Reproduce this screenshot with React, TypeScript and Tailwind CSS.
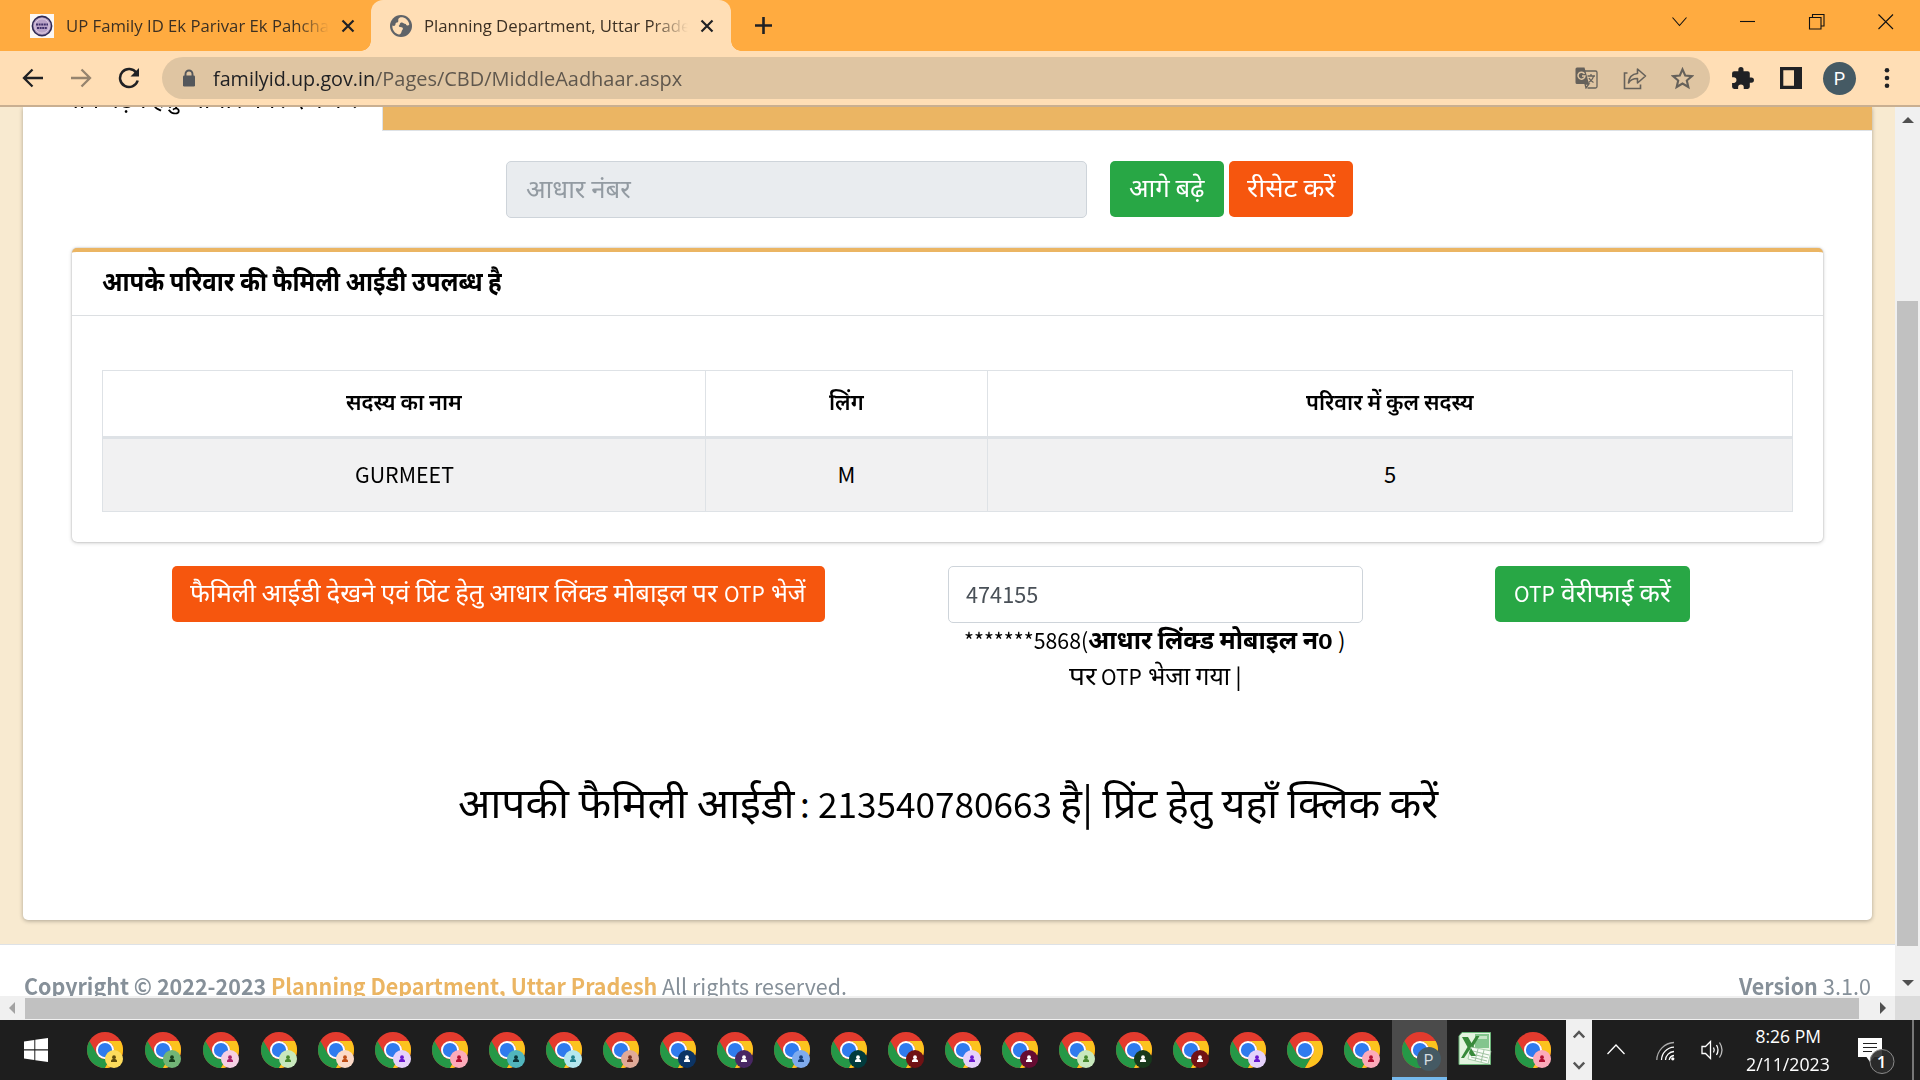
import { useLayoutEffect, useRef, type ReactNode } from "react";

/* Inline text that is stretched or squeezed horizontally to a given width. */
function Fit({ w, className = "", children }: { w: number; className?: string; children: ReactNode }) {
  const ref = useRef<HTMLSpanElement>(null);
  useLayoutEffect(() => {
    const el = ref.current;
    if (el && el.offsetWidth) el.style.transform = `scaleX(${w / el.offsetWidth})`;
  }, [w]);
  return (
    <span className={`inline-block shrink-0 whitespace-nowrap text-left ${className}`} style={{ width: w }}>
      <span ref={ref} className="inline-block origin-left whitespace-nowrap">
        {children}
      </span>
    </span>
  );
}

function CloseX({ className }: { className: string }) {
  return (
    <svg className={className} viewBox="0 0 14 14" stroke="#202124" strokeWidth="2.2" fill="none">
      <path d="M1.5 1.5 12.5 12.5M12.5 1.5 1.5 12.5" />
    </svg>
  );
}

function TabBar() {
  return (
    <div className="flex h-[51px] bg-[#ffab40] font-['Open_Sans','Noto_Sans',sans-serif] text-[17px] leading-[51px] text-[#3c3023]">
      <div className="flex w-[371px] items-center pl-[30px]">
        <div className="flex h-6 w-6 items-center justify-center bg-[#fbf7f4]">
          <svg className="h-[22px] w-[22px]" viewBox="0 0 22 22">
            <circle cx="11" cy="11" r="9.6" fill="#b9a3c8" stroke="#2f2a55" strokeWidth="1.6" />
            <circle cx="11" cy="11" r="7.2" fill="none" stroke="#dccbe0" strokeWidth="1" />
            <path d="M5 9.5h12M6 13h10" stroke="#40306a" strokeWidth="2" strokeDasharray="2 .6" />
          </svg>
        </div>
        <div className="ml-[12px] w-[263px] overflow-hidden [mask-image:linear-gradient(to_right,black_88%,transparent)]">
          <Fit w={263}>UP Family ID Ek Parivar Ek Pahcha</Fit>
        </div>
        <CloseX className="ml-[12px] h-[14px] w-[14px]" />
      </div>
      <div className="relative flex w-[360px] items-center rounded-t-[12px] bg-[#ffdeb5] pl-[19px]">
        <div className="absolute bottom-0 -left-[10px] h-[10px] w-[10px] bg-[radial-gradient(circle_at_0_0,transparent_9.5px,#ffdeb5_10px)]" />
        <div className="absolute -right-[10px] bottom-0 h-[10px] w-[10px] bg-[radial-gradient(circle_at_100%_0,transparent_9.5px,#ffdeb5_10px)]" />
        <svg className="h-[22px] w-[22px]" viewBox="0 0 22 22">
          <circle cx="11" cy="11" r="11" fill="#5f6368" />
          <path d="M10 2.5c4-.8 8.500 2 9.300 7-1 2-3 1-3.500-.5-2 0-2.500-1.500-4-1.500-2.500 0-1.500 2.500-3 3.200 0 2 3 .8 4 2.300.6 1.500-1 2-1.200 3.500-.3 1.500-1.200 3.200-2.800 3C5 18.500 2 15 2.400 10.500c1.500.8 3 .5 3.100-1.500 0-1.800 2.500-1 2.800-2.700.2-1.300-.8-2.300 1.700-3.800Z" fill="#ffdeb5" />
        </svg>
        <div className="ml-[12px] w-[264px] overflow-hidden [mask-image:linear-gradient(to_right,black_86%,transparent)]">
          <Fit w={266}>Planning Department, Uttar Prade</Fit>
        </div>
        <CloseX className="ml-[12px] h-[14px] w-[14px]" />
      </div>
      <div className="flex items-center pl-[23px]">
        <svg className="h-[19px] w-[19px]" viewBox="0 0 19 19" stroke="#202124" strokeWidth="2.6">
          <path d="M9.500 1v17M1 9.500h17" />
        </svg>
      </div>
      <svg className="mt-[13px] mr-[26px] ml-auto h-[18px] w-[222px]" viewBox="0 0 222 18" fill="none" stroke="#111" strokeWidth="1.100">
        <path d="M.5 4.500 7.500 12.500 14.500 4.500" />
        <path d="M68 8.500h15" />
        <path d="M137.500 4.500h11.500v11.500h-11.500zM140.500 4.500v-3h11.500v11.500h-3" />
        <path d="M206.500 1.500l14.500 14.500M221 1.500l-14.500 14.500" />
      </svg>
    </div>
  );
}

function Toolbar() {
  return (
    <div className="flex h-[56px] items-center border-b-2 border-[#c9af91] bg-[#ffdeb5] font-['Open_Sans','Noto_Sans',sans-serif]">
      <svg className="ml-[22px] h-[22px] w-[22px]" viewBox="0 0 22 22" fill="none" stroke="#202124" strokeWidth="2.300">
        <path d="M21 11H2.500M10.500 2.500 2 11l8.500 8.500" />
      </svg>
      <svg className="ml-[26px] h-[22px] w-[22px]" viewBox="0 0 22 22" fill="none" stroke="#96846e" strokeWidth="2.300">
        <path d="M1 11h18.500M11.500 2.500 20 11l-8.500 8.500" />
      </svg>
      <svg className="ml-[26px] h-[22px] w-[22px]" viewBox="0 0 22 22" fill="none" stroke="#202124" strokeWidth="2.500">
        <path d="M18.500 6A9 9 0 1 0 19.700 13.500" />
        <path d="M21 1v8.500h-8.500z" fill="#202124" stroke="none" />
      </svg>
      <div className="ml-[22px] flex h-[42px] w-[1548px] items-center rounded-full bg-[#dfc5a2] pl-[20px] text-[19.500px] leading-[42px] text-[#5f574d]">
        <svg className="h-[18px] w-[14px]" viewBox="0 0 14 18">
          <path d="M3.500 8V5a3.500 3.500 0 0 1 7 0v3" fill="none" stroke="#54575b" strokeWidth="1.900" />
          <rect x="1" y="6.500" width="12" height="11" rx="1.300" fill="#54575b" />
        </svg>
        <Fit w={162} className="ml-[17px] pt-[2px] text-[#202124]">familyid.up.gov.in</Fit>
        <Fit w={307} className="pt-[2px]">/Pages/CBD/MiddleAadhaar.aspx</Fit>
        <svg className="ml-auto h-[22px] w-[23px]" viewBox="0 0 23 22">
          <path d="M10 4h10.500a1.500 1.500 0 0 1 1.500 1.500v14a1.500 1.500 0 0 1-1.500 1.500H12.500" fill="none" stroke="#66615a" strokeWidth="1.300" />
          <path d="M2 .5h7.500L14 17H2A1.500 1.500 0 0 1 .5 15.500V2A1.500 1.500 0 0 1 2 .5Z" fill="#66615a" />
          <path d="M9.500 6.800A3.500 3.500 0 1 0 10 9H7" fill="none" stroke="#dfc5a2" strokeWidth="1.500" />
          <path d="M12.500 9h7.500M16 7v2M18.500 9c-.5 3-2.500 5-5 6.500M14 11c1 2 2.500 3.500 4.500 4.500M10 17h4l-3 4z" fill="none" stroke="#66615a" strokeWidth="1.300" />
        </svg>
        <svg className="ml-[25px] h-[23px] w-[24px]" viewBox="0 0 24 23" fill="none" stroke="#66615a" strokeWidth="1.600">
          <path d="M4.500 6H1.500v15.500h16v-4" />
          <path d="M14.500 2v4.500C9.500 7 6 10 5.500 16c2-3.500 5-4.500 9-4.500V16L22.500 9z" strokeLinejoin="round" />
        </svg>
        <svg className="mr-[16px] ml-[24px] h-[23px] w-[23px]" viewBox="0 0 24 24" fill="none" stroke="#66615a" strokeWidth="2.200">
          <path d="M12 2.500l2.800 6.400 7 .6-5.300 4.600 1.600 6.800L12 17.300l-6.100 3.600 1.600-6.800L2.200 9.500l7-.6z" />
        </svg>
      </div>
      <svg className="ml-[20px] h-[25px] w-[25px]" viewBox="0 0 24 24" fill="#202124">
        <path d="M20.500 11H19V7a2 2 0 0 0-2-2h-4V3.500a2.500 2.500 0 0 0-5 0V5H4a2 2 0 0 0-2 2v3.800h1.500a2.700 2.700 0 0 1 0 5.400H2V20a2 2 0 0 0 2 2h3.800v-1.500a2.700 2.700 0 0 1 5.400 0V22H17a2 2 0 0 0 2-2v-4h1.500a2.500 2.500 0 0 0 0-5z" />
      </svg>
      <svg className="ml-[25px] h-[22px] w-[22px]" viewBox="0 0 22 22">
        <path d="M0 0h22v22H0zM3.300 3.300v15.400h10.700V3.300z" fill="#202124" fillRule="evenodd" />
      </svg>
      <div className="ml-[21px] flex h-[33px] w-[33px] items-center justify-center rounded-full bg-[#455a64] font-['Roboto',sans-serif] text-[18px] text-white">P</div>
      <svg className="ml-[28px] h-[20px] w-[6px]" viewBox="0 0 6 20" fill="#202124">
        <circle cx="3" cy="2.300" r="2.300" />
        <circle cx="3" cy="10" r="2.300" />
        <circle cx="3" cy="17.700" r="2.300" />
      </svg>
    </div>
  );
}

function MemberTable() {
  return (
    <div className="mx-[30px] mt-[54px] grid grid-cols-[603px_282px_804px] border border-[#dee2e6] text-center text-black">
      <div className="h-[68px] border-r border-b-3 border-[#dee2e6] text-[23px] leading-[58px] font-semibold">
        <Fit w={116}>सदस्य का नाम</Fit>
      </div>
      <div className="h-[68px] border-r border-b-3 border-[#dee2e6] text-[23px] leading-[58px] font-semibold">
        <Fit w={35}>लिंग</Fit>
      </div>
      <div className="h-[68px] border-b-3 border-[#dee2e6] text-[23px] leading-[58px] font-semibold">
        <Fit w={168}>परिवार में कुल सदस्य</Fit>
      </div>
      <div className="h-[72px] border-r border-[#dee2e6] bg-[#f1f1f2] text-[22px] leading-[68px]">
        <Fit w={99}>GURMEET</Fit>
      </div>
      <div className="h-[72px] border-r border-[#dee2e6] bg-[#f1f1f2] text-[22px] leading-[68px]">
        <Fit w={18}>M</Fit>
      </div>
      <div className="h-[72px] bg-[#f1f1f2] text-[22px] leading-[68px]">
        <Fit w={12}>5</Fit>
      </div>
    </div>
  );
}

function Page() {
  return (
    <div className="flex h-[889px] w-[1895px] flex-col overflow-hidden bg-[#f8ead0] font-['Noto_Sans_CJK_JP','Noto_Sans',sans-serif]">
      <div className="ml-[23px] h-[813px] w-[1849px] shrink-0 rounded-b-[5px] bg-white shadow-[0_1px_4px_rgba(0,0,0,0.3)]">
        <div className="flex h-[24px] border-b border-[#dee2e6] bg-[#ebb563]">
          <div className="h-[24px] w-[360px] overflow-hidden border-r border-[#dee2e6] bg-white pl-[37px] text-black">
            <div className="-mt-[29px] h-[40px] text-[24px] leading-[40px]">
              <Fit w={297}>आगे बढ़ने हेतु आधार नंबर दर्ज करें</Fit>
            </div>
          </div>
        </div>
        <div className="flex pt-[30px] pl-[483px]">
          <div className="h-[57px] w-[581px] rounded-[5px] border border-[#ced4da] bg-[#e9ecef] pl-[19px] text-[26px] leading-[50px] text-[#939ba2]">
            <Fit w={105}>आधार नंबर</Fit>
          </div>
          <div className="ml-[23px] h-[56px] w-[114px] rounded-[5px] bg-[#28a745] text-center text-[26px] leading-[49px] text-white">
            <Fit w={76}>आगे बढ़े</Fit>
          </div>
          <div className="ml-[5px] h-[56px] w-[124px] rounded-[5px] bg-[#f6560e] text-center text-[26px] leading-[49px] text-white">
            <Fit w={88}>रीसेट करें</Fit>
          </div>
        </div>
        <div className="mt-[30px] ml-[49px] h-[294px] w-[1751px] rounded-[5px] border-t-4 border-[#ebb563] bg-white shadow-[0_0_2px_rgba(0,0,0,0.25),0_1px_4px_rgba(0,0,0,0.18)]">
          <div className="h-[64px] border-b border-[#dcdfe2] pl-[30px] text-[27px] leading-[55px] font-bold text-black">
            <Fit w={400}>आपके परिवार की फैमिली आईडी उपलब्ध है</Fit>
          </div>
          <MemberTable />
        </div>
        <div className="flex pt-[24px] pl-[149px]">
          <div className="h-[56px] w-[653px] rounded-[5px] bg-[#f6560e] pl-[18px] text-[26px] leading-[49px] text-white">
            <Fit w={527}>फैमिली आईडी देखने एवं प्रिंट हेतु आधार लिंक्ड मोबाइल पर</Fit>
            <Fit w={41} className="ml-[7px] text-[22px]">OTP</Fit>
            <Fit w={35} className="ml-[6px]">भेजें</Fit>
          </div>
          <div className="ml-[123px] w-[415px] text-black">
            <div className="h-[57px] rounded-[5px] border border-[#ced4da] pl-[17px] text-[22px] leading-[52px] text-[#495057]">
              <Fit w={72}>474155</Fit>
            </div>
            <div className="h-[36px] pl-[16px] text-[25px] leading-[31px]">
              <Fit w={124} className="text-[22px]">*******5868(</Fit>
              <Fit w={230} className="font-bold">आधार लिंक्ड मोबाइल न</Fit>
              <Fit w={15} className="text-[20px] font-bold">0</Fit>
              <Fit w={7} className="ml-[5px] text-[22px]">)</Fit>
            </div>
            <div className="h-[36px] pl-[121px] text-[25px] leading-[31px]">
              <Fit w={27}>पर</Fit>
              <Fit w={41} className="ml-[5px] text-[22px]">OTP</Fit>
              <Fit w={82} className="ml-[6px]">भेजा गया</Fit>
              <Fit w={7} className="ml-[5px] text-[22px]">|</Fit>
            </div>
          </div>
          <div className="ml-[132px] h-[56px] w-[195px] rounded-[5px] bg-[#28a745] pl-[19px] text-[26px] leading-[49px] text-white">
            <Fit w={41} className="text-[22px]">OTP</Fit>
            <Fit w={110} className="ml-[6px]">वेरीफाई करें</Fit>
          </div>
        </div>
        <div className="mt-[70px] h-[70px] pl-[435px] text-[41px] leading-[70px] text-black">
          <Fit w={336}>आपकी फैमिली आईडी</Fit>
          <Fit w={10} className="ml-[6px] text-[35px]">:</Fit>
          <Fit w={234} className="ml-[8px] text-[35px]">213540780663</Fit>
          <Fit w={378} className="ml-[8px]">है| प्रिंट हेतु यहाँ क्लिक करें</Fit>
        </div>
      </div>
      <div className="mt-[24px] flex h-[80px] shrink-0 border-t border-[#dee2e6] bg-white pl-[24px] text-[22px] leading-[81px] text-[#869099]">
        <Fit w={242} className="font-bold">Copyright © 2022-2023</Fit>
        <Fit w={386} className="ml-[5px] font-bold text-[#ebb563]">Planning Department, Uttar Pradesh</Fit>
        <Fit w={185} className="ml-[5px]">All rights reserved.</Fit>
        <Fit w={79} className="ml-auto font-bold">Version</Fit>
        <Fit w={48} className="mr-[24px] ml-[5px]">3.1.0</Fit>
      </div>
    </div>
  );
}

function VerticalScrollbar() {
  return (
    <div className="flex h-[889px] w-[25px] flex-col items-center bg-[#f0f0f0]">
      <svg className="mt-[10px] h-[6px] w-[12px]" viewBox="0 0 12 6"><path d="M0 6 6 0l6 6z" fill="#505050" /></svg>
      <div className="mt-[178px] h-[645px] w-[21px] bg-[#c1c1c1]" />
      <svg className="mt-[34px] h-[6px] w-[12px]" viewBox="0 0 12 6"><path d="M0 0h12L6 6z" fill="#505050" /></svg>
    </div>
  );
}

function HorizontalScrollbar() {
  return (
    <div className="flex h-[24px] bg-[#f0f0f0]">
      <div className="flex w-[1895px] items-center">
        <svg className="ml-[9px] h-[12px] w-[6px]" viewBox="0 0 6 12"><path d="M6 0v12L0 6z" fill="#a3a3a3" /></svg>
        <div className="ml-[10px] h-[21px] w-[1834px] bg-[#c1c1c1]" />
        <svg className="ml-[21px] h-[12px] w-[6px]" viewBox="0 0 6 12"><path d="M0 0v12L6 6z" fill="#505050" /></svg>
      </div>
      <div className="w-[25px] bg-[#dcdcdc]" />
    </div>
  );
}

function ChromeIcon({ badge }: { badge?: [string, string] | "P" }) {
  return (
    <svg className="h-[36px] w-[36px] overflow-visible" viewBox="0 0 36 36">
      <g transform="scale(.75)">
        <circle cx="24" cy="24" r="24" fill="#e33b2e" />
        <path d="M3.220 12 13.600 30A12 12 0 0 0 34.400 30L24 48A24 24 0 0 1 3.220 12Z" fill="#259847" />
        <path d="M24 12H44.780A24 24 0 0 1 24 48L34.400 30A12 12 0 0 0 24 12Z" fill="#fcc31e" />
        <circle cx="24" cy="24" r="12" fill="#fff" />
        <circle cx="24" cy="24" r="9.500" fill="#2f7bee" />
      </g>
      {badge === "P" && (
        <>
          <circle cx="27" cy="27" r="12" fill="#455a64" />
          <text x="26.500" y="32.500" textAnchor="middle" fontSize="15" fontFamily="Roboto" fill="#d5dde0">P</text>
        </>
      )}
      {badge && badge !== "P" && (
        <>
          <circle cx="27" cy="27" r="9" fill={badge[0]} />
          <circle cx="27" cy="25.200" r="1.900" fill={badge[1]} />
          <path d="M24 30v-1.300c0-1.200 1.500-1.700 3-1.700s3 .5 3 1.700V30z" fill={badge[1]} />
        </>
      )}
    </svg>
  );
}

const profiles: [string, string][] = [
  ["#fddc5c", "#5f4c0c"], ["#72b577", "#173d1c"], ["#f5d0e4", "#a82169"], ["#c8e8bd", "#47892d"],
  ["#fcdac8", "#c04e17"], ["#e5d2fb", "#6a17cf"], ["#fcabba", "#b10f31"], ["#51b5bd", "#0b3439"],
  ["#b5e7ef", "#20818f"], ["#e0aa98", "#743020"], ["#0c3464", "#ffffff"], ["#482764", "#ffffff"],
  ["#7fabee", "#153d79"], ["#023b3d", "#ffffff"], ["#701214", "#ffffff"], ["#e5d2fb", "#6a17cf"],
  ["#650c32", "#ffffff"], ["#c8e8bd", "#47892d"], ["#18391c", "#ffffff"], ["#701214", "#ffffff"],
  ["#e5d2fb", "#6a17cf"],
];

function ExcelIcon() {
  return (
    <svg className="h-[33px] w-[34px]" viewBox="0 0 34 33">
      <path d="M4 .5h28.500v32H1V4z" fill="#e3f3df" stroke="#6cb579" />
      <path d="M17 2h14v14H17z" fill="#83c58d" />
      <path d="M19 4h10v3H19z" fill="#c6e5c6" />
      <path d="M4 5h6l3.500 6L18 4h3.500l-6 10 6 10H15l-3.500-6L6 26H3l6.500-11z" fill="#37893a" />
      <path d="M13 15l20 4-3 13-20-5z" fill="#f8fcf7" stroke="#8dbc91" strokeWidth=".7" />
      <path d="M15 19l16 4M14 22l16 4M13 25l16 4M20 17l-3 12M26 18l-3 12" stroke="#9fc2a1" strokeWidth="1" />
      <path d="M13 16l5 8h-5l-2-3z" fill="#37893a" />
    </svg>
  );
}

function Taskbar() {
  return (
    <div className="flex h-[60px] bg-[#1e1e1e]">
      <svg className="mt-[18px] ml-[24px] h-[24px] w-[24px]" viewBox="0 0 24 24" fill="#fff">
        <path d="M0 3.500 10.300 2v9.300H0zM11.300 1.800 24 0v11.300H11.300zM0 12.500h10.300V22L0 20.500zM11.300 12.500H24V24l-12.700-1.800z" />
      </svg>
      <div className="ml-[28px] flex h-[60px] items-center">
        {profiles.map((p, i) => (
          <div key={i} className={i < 3 ? "flex w-[58px] justify-center" : "flex w-[57px] justify-center"}>
            <ChromeIcon badge={p} />
          </div>
        ))}
        <div className="flex w-[57px] justify-center"><ChromeIcon /></div>
        <div className="flex w-[57px] justify-center"><ChromeIcon badge={["#fcabba", "#b10f31"]} /></div>
        <div className="ml-[2px] flex h-[60px] w-[55px] items-center justify-center border-b-3 border-[#76b9ed] bg-[#4b4b4b] pt-[3px]">
          <ChromeIcon badge="P" />
        </div>
        <div className="-mt-[3px] flex w-[55px] justify-center"><ExcelIcon /></div>
        <div className="flex w-[61px] justify-center"><ChromeIcon badge={["#fcabba", "#b10f31"]} /></div>
      </div>
      <div className="ml-auto flex h-[60px] w-[26px] flex-col items-center justify-between bg-[#f0f0f0] py-[10px]">
        <svg className="h-[9px] w-[12px]" viewBox="0 0 12 9" fill="none" stroke="#555" strokeWidth="2.500"><path d="M.8 7.500 6 2l5.200 5.500" /></svg>
        <svg className="h-[9px] w-[12px]" viewBox="0 0 12 9" fill="none" stroke="#555" strokeWidth="2.500"><path d="M.8 1.500 6 7l5.200-5.500" /></svg>
      </div>
      <div className="flex w-[328px] text-white">
        <svg className="mt-[24px] ml-[15px] h-[11px] w-[18px]" viewBox="0 0 18 11" fill="none" stroke="#fff" strokeWidth="1.300"><path d="M.5 10 9 1l8.500 9" /></svg>
        <svg className="mt-[21px] ml-[31px] h-[20px] w-[19px]" viewBox="0 0 19 20" fill="none" stroke="#fff" strokeWidth="1.300">
          <path d="M.8 19A18 18 0 0 1 18 1.500" stroke="#aaa" />
          <path d="M5.500 19A13 13 0 0 1 18 6.200M9.500 19A9 9 0 0 1 18 10.500" />
          <path d="M13.200 19a5.500 5.500 0 0 1 4.800-4.500" />
          <circle cx="16.800" cy="17.800" r="1.600" fill="#fff" stroke="none" />
        </svg>
        <svg className="mt-[20px] ml-[26px] h-[20px] w-[23px]" viewBox="0 0 23 20" fill="none" stroke="#fff" strokeWidth="1.300">
          <path d="M1 6.500h3.500L9.500 1.500v17L4.500 13.500H1z" />
          <path d="M12.500 7.500q1.500 2.500 0 5M15.500 5q3 5 0 10" />
          <path d="M18.500 2.500q5 7.500 0 15" stroke="#bbb" />
        </svg>
        <div className="ml-[22px] flex w-[84px] flex-col items-center pt-[2px] font-['Open_Sans','Noto_Sans',sans-serif] text-[17.500px] leading-[28px]">
          <Fit w={65}>8:26 PM</Fit>
          <Fit w={84}>2/11/2023</Fit>
        </div>
        <svg className="mt-[18px] ml-[28px] h-[37px] w-[37px]" viewBox="0 0 37 37">
          <path d="M0 0h24v19h-7.500L12 24l-3.500-5H0z" fill="#fff" />
          <path d="M5 5.500h14M5 9.500h14M5 13.500h9" stroke="#222" strokeWidth="1.100" />
          <circle cx="24" cy="23.500" r="12" fill="#2b2b2b" fillOpacity=".9" stroke="#8a8a8a" />
          <text x="23.500" y="29.500" textAnchor="middle" fontSize="17" fontFamily="Open Sans" fontWeight="600" fill="#fff">1</text>
        </svg>
        <div className="mr-[6px] ml-auto w-[2px] bg-[#777]" />
      </div>
    </div>
  );
}

export default function App() {
  return (
    <div className="h-[1080px] w-[1920px] overflow-hidden">
      <TabBar />
      <Toolbar />
      <div className="flex">
        <Page />
        <VerticalScrollbar />
      </div>
      <HorizontalScrollbar />
      <Taskbar />
    </div>
  );
}
